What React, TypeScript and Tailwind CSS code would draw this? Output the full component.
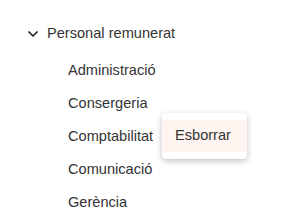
import { ChevronDown } from "lucide-react";

const items = ["Administració", "Consergeria", "Comptabilitat", "Comunicació", "Gerència"];

export default function App() {
  return (
    <div className="h-[220px] w-[289px] bg-white text-[14.6px] text-[#333] font-['Liberation_Sans',Arial,sans-serif]">
      <div className="pl-[25px] pt-[24px]">
        <div className="flex h-[20px] items-center gap-[6px]">
          <ChevronDown size={16} strokeWidth={2.6} className="text-[#222]" />
          <span>Personal remunerat</span>
        </div>
        <ul className="mt-[10px] pl-[43px]">
          {items.map((item) => (
            <li key={item} className="relative flex h-[33px] items-center">
              {item}
              {item === "Comptabilitat" && (
                <div className="absolute left-[94px] top-[-7px] w-[85px] rounded bg-white py-[7px] shadow-[0_2px_6px_rgba(0,0,0,0.25)]">
                  <div className="flex h-[32px] items-center bg-[#fff5f0] pl-[13px]">Esborrar</div>
                </div>
              )}
            </li>
          ))}
        </ul>
      </div>
    </div>
  );
}
